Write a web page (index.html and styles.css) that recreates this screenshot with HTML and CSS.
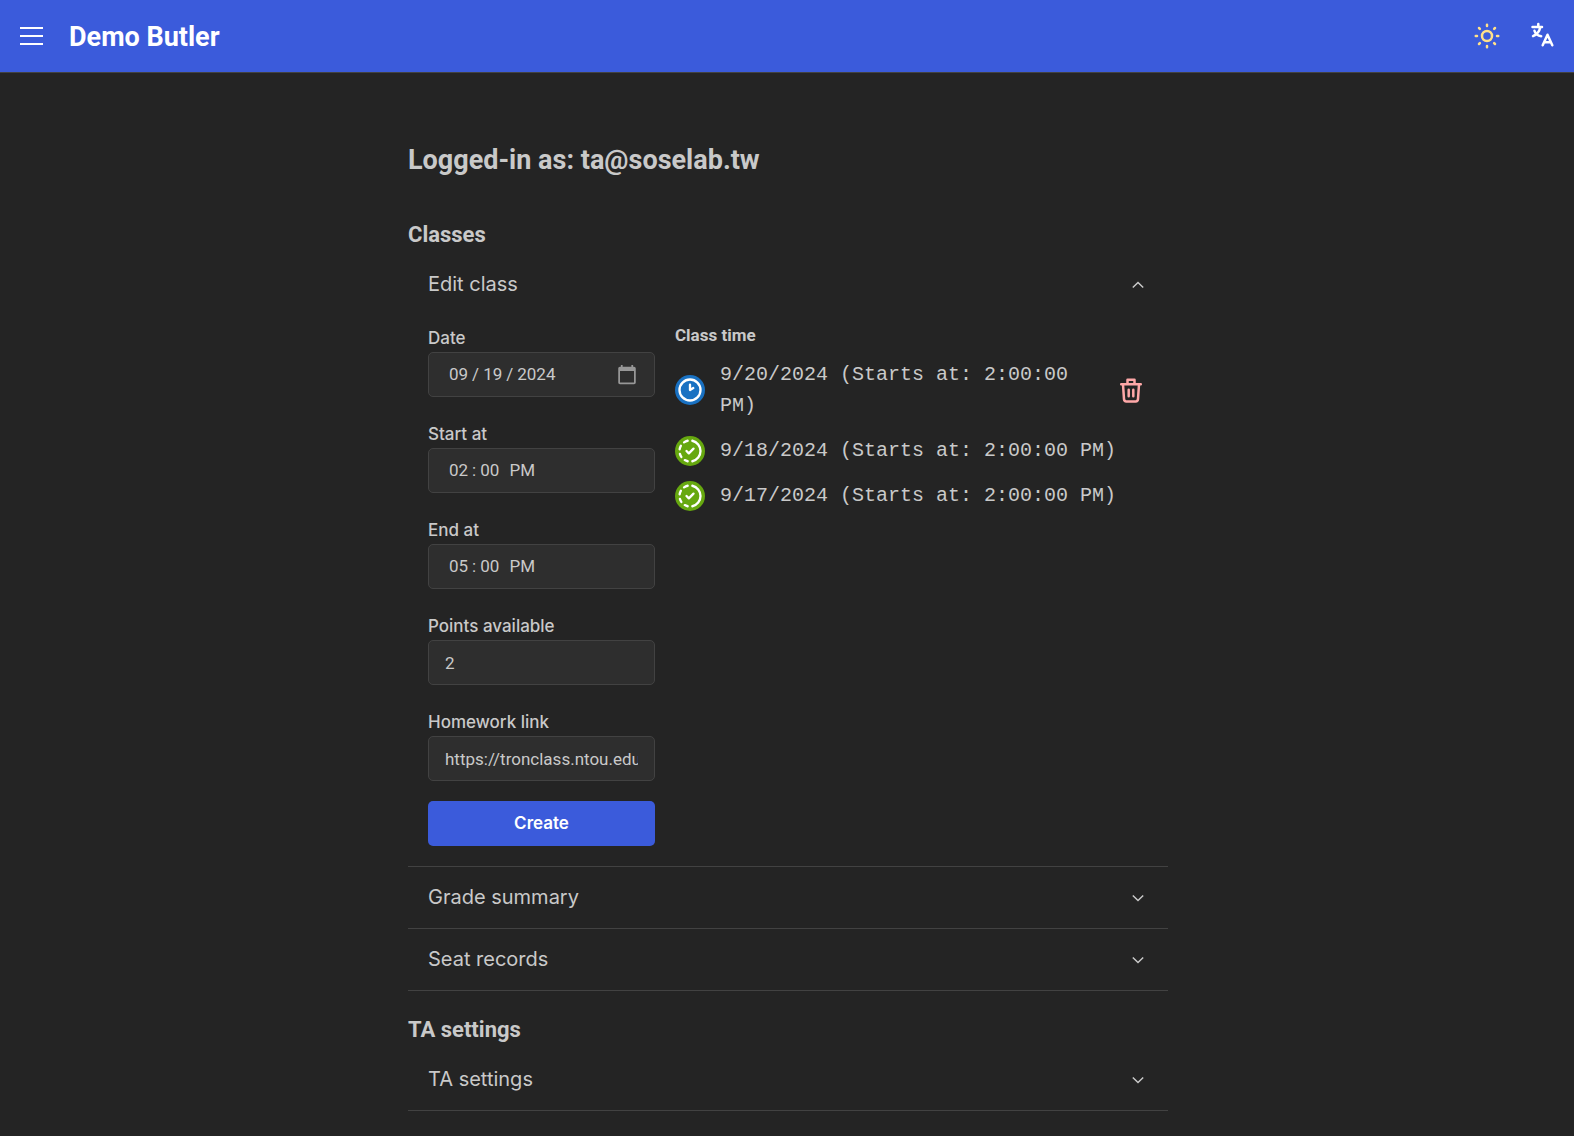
FILE: index.html
```html
<!DOCTYPE html>
<html lang="en-US">
<head>
<meta charset="utf-8">
<meta name="viewport" content="width=device-width, initial-scale=1">
<title>Demo Butler</title>
<link rel="stylesheet" href="styles.css">
</head>
<body>
<svg class="sprite" aria-hidden="true">
  <symbol id="chevron-down" viewBox="0 0 20 20"><path d="M4.800 7.500 10 12.500l5.200-5"/></symbol>
  <symbol id="progress-check" viewBox="0 0 24 24">
    <path d="M10 20.777a8.942 8.942 0 0 1-2.48-.969M14 3.223a9.003 9.003 0 0 1 0 17.554M4.579 17.093a8.961 8.961 0 0 1-1.227-2.592M3.124 10.5c.16-.95.468-1.85.9-2.675l.169-.305M6.907 4.579a8.954 8.954 0 0 1 3.093-1.356M9 12l2 2 4-4"/>
  </symbol>
</svg>
<header class="header">
  <button class="icon-button burger" type="button" aria-label="Menu"><span class="bar"></span><span class="bar"></span><span class="bar"></span></button>
  <h1 class="brand">Demo Butler</h1>
  <div class="header-actions">
    <button class="icon-button" type="button" aria-label="Toggle color scheme">
      <svg class="icon sun" width="30" height="30" viewBox="0 0 24 24"><circle cx="12" cy="12" r="4"/><path d="M3 12h1m8-9v1m8 8h1m-9 8v1M5.600 5.600l.7.7m12.100-.7-.7.7m0 11.400.7.7m-12.100-.7-.7.7"/></svg>
    </button>
    <button class="icon-button" type="button" aria-label="Change language">
      <svg class="icon language" width="30" height="30" viewBox="0 0 30 30"><path d="M5.500 6h9.500M11.300 3v3M13.200 6.500c-.8 4-3.400 7-7.200 8.600M7.500 9.800c1 3 3.600 5 6.700 5.400M15.700 24.300l4.800-10.600 4.800 10.600M17.500 21.200h6"/></svg>
    </button>
  </div>
</header>
<main class="main">
  <h2 class="page-title">Logged-in as: ta@soselab.tw</h2>
  <section class="group">
    <h3 class="group-title">Classes</h3>
    <div class="item">
      <button class="control" type="button" aria-expanded="true">Edit class<svg class="icon chevron open" width="20" height="20"><use href="#chevron-down"/></svg></button>
      <div class="panel">
        <form class="form">
          <div class="field"><label for="date">Date</label><input class="input" id="date" type="date" value="2024-09-19"></div>
          <div class="field"><label for="start">Start at</label><input class="input" id="start" type="time" value="14:00"></div>
          <div class="field"><label for="end">End at</label><input class="input" id="end" type="time" value="17:00"></div>
          <div class="field"><label for="points">Points available</label><input class="input" id="points" type="text" inputmode="numeric" value="2"></div>
          <div class="field"><label for="link">Homework link</label><input class="input" id="link" type="text" value="https://tronclass.ntou.edu.tw"></div>
          <button class="submit" type="submit">Create</button>
        </form>
        <div class="times">
          <h4 class="times-title">Class time</h4>
          <ul class="time-list">
            <li class="time">
              <span class="badge upcoming"><svg class="icon" width="28" height="28" viewBox="0 0 24 24"><circle cx="12" cy="12" r="9"/><path d="M12 7.500V12l2.800-1.700"/></svg></span>
              <span class="time-text">9/20/2024 (Starts at: 2:00:00 PM)</span>
              <button class="icon-button delete" type="button" aria-label="Delete class"><svg class="icon trash" width="28" height="28" viewBox="0 0 28 28"><path d="M4.200 8.300h19.600M10.500 8V3.800h7V8M6 8.500l1 14.700q.2 2.300 2.300 2.300h9.400q2.100 0 2.300-2.300l1-14.700M11.700 13.800v6.400M16.300 13.800v6.400"/></svg></button>
            </li>
            <li class="time">
              <span class="badge done"><svg class="icon" width="28" height="28"><use href="#progress-check"/></svg></span>
              <span class="time-text">9/18/2024 (Starts at: 2:00:00 PM)</span>
            </li>
            <li class="time">
              <span class="badge done"><svg class="icon" width="28" height="28"><use href="#progress-check"/></svg></span>
              <span class="time-text">9/17/2024 (Starts at: 2:00:00 PM)</span>
            </li>
          </ul>
        </div>
      </div>
    </div>
    <div class="item">
      <button class="control" type="button" aria-expanded="false">Grade summary<svg class="icon chevron" width="20" height="20"><use href="#chevron-down"/></svg></button>
    </div>
    <div class="item">
      <button class="control" type="button" aria-expanded="false">Seat records<svg class="icon chevron" width="20" height="20"><use href="#chevron-down"/></svg></button>
    </div>
  </section>
  <section class="group">
    <h3 class="group-title">TA settings</h3>
    <div class="item">
      <button class="control" type="button" aria-expanded="false">TA settings<svg class="icon chevron" width="20" height="20"><use href="#chevron-down"/></svg></button>
    </div>
  </section>
</main>
</body>
</html>
```
FILE: styles.css
```css
:root {
  color-scheme: dark;
  --body: #242424;
  --text: #c9c9c9;
  --line: #424242;
  --field: #2e2e2e;
  --primary: #3b5bdb;
}

*,
*::before,
*::after {
  box-sizing: border-box;
}

body {
  margin: 0;
  background: var(--body);
  color: var(--text);
  font-family: Inter, "Liberation Sans", sans-serif;
  font-size: 20px;
  line-height: 31px;
}

h1,
h2,
h3,
h4,
ul {
  margin: 0;
  padding: 0;
}

h1,
h2,
h3,
h4 {
  font-family: Roboto, "Liberation Sans", sans-serif;
  font-weight: 700;
}

button,
input {
  font: inherit;
  color: inherit;
}

.sprite {
  display: none;
}

.icon {
  display: block;
  flex: none;
  fill: none;
  stroke: currentColor;
  stroke-width: 2;
  stroke-linecap: round;
  stroke-linejoin: round;
}

.icon-button {
  display: flex;
  align-items: center;
  justify-content: center;
  flex: none;
  width: 35px;
  height: 35px;
  padding: 0;
  border: 0;
  background: transparent;
  cursor: pointer;
}

.header {
  display: flex;
  align-items: center;
  gap: 20px;
  padding: 0 15px 0 14px;
  height: 73px;
  border-bottom: 1px solid var(--line);
  background: var(--primary);
  color: #fff;
}

.burger {
  flex-direction: column;
  gap: 6px;
}

.bar {
  width: 23px;
  height: 2px;
  background: #fff;
}

.brand {
  padding-top: 2px;
  font-size: 27px;
  line-height: 36px;
}

.header-actions {
  display: flex;
  gap: 20px;
  margin-left: auto;
}

.sun {
  color: #ffe08a;
}

.language {
  stroke-width: 2.5;
}

.main {
  max-width: 762px;
  margin: 0 auto;
  padding: 69px 0 20px 2px;
}

.page-title {
  margin-bottom: 41px;
  font-size: 27px;
  line-height: 36px;
}

.group {
  margin-bottom: 23px;
}

.group-title {
  margin-bottom: 3px;
  font-size: 22px;
  line-height: 32px;
}

.item {
  border-bottom: 1px solid var(--line);
}

.control {
  display: flex;
  align-items: center;
  justify-content: space-between;
  width: 100%;
  padding: 15px 20px;
  border: 0;
  background: transparent;
  text-align: left;
  cursor: pointer;
}

.chevron {
  stroke-width: 1.5;
  stroke-linecap: butt;
  stroke-linejoin: miter;
}

.chevron.open {
  transform: rotate(180deg);
}

.panel {
  display: grid;
  grid-template-columns: 227px minmax(0, 1fr);
  gap: 20px;
  padding: 10px 20px 20px;
}

.form {
  display: flex;
  flex-direction: column;
  gap: 24px;
}

.field {
  display: flex;
  flex-direction: column;
  font-size: 17px;
  font-weight: 500;
  line-height: 27px;
}

.input {
  width: 100%;
  height: 45px;
  padding: 0 16px;
  border: 1px solid var(--line);
  border-radius: 5px;
  background: var(--field);
  font-family: Roboto, "Liberation Sans", sans-serif;
  font-weight: 400;
}

.input::-webkit-datetime-edit-month-field,
.input::-webkit-datetime-edit-day-field,
.input::-webkit-datetime-edit-year-field,
.input::-webkit-datetime-edit-hour-field,
.input::-webkit-datetime-edit-minute-field,
.input::-webkit-datetime-edit-ampm-field {
  padding: 0 4px;
}

.input::-webkit-calendar-picker-indicator {
  width: 22px;
  height: 22px;
  padding: 0;
  opacity: 0.5;
}

.input[type="time"]::-webkit-calendar-picker-indicator {
  display: none;
}

.submit {
  height: 45px;
  margin-top: -4px;
  border: 0;
  border-radius: 5px;
  background: var(--primary);
  color: #fff;
  font-size: 17px;
  font-weight: 600;
  cursor: pointer;
}

.times {
  display: flex;
  flex-direction: column;
  gap: 14px;
}

.times-title {
  font-size: 17px;
  line-height: 20px;
}

.time-list {
  display: flex;
  flex-direction: column;
  gap: 14px;
  list-style: none;
}

.time {
  display: flex;
  align-items: center;
  gap: 15px;
}

.time-text {
  flex: 1;
  font-family: "Liberation Mono", monospace;
}

.badge {
  display: flex;
  align-items: center;
  justify-content: center;
  flex: none;
  width: 30px;
  height: 30px;
  border-radius: 50%;
  color: #fff;
}

.upcoming {
  background: #1971c2;
}

.done {
  background: #66a80f;
}

.delete {
  margin-left: -15px;
  color: #ffa8a8;
}

.trash {
  stroke-width: 2.5;
}
```
